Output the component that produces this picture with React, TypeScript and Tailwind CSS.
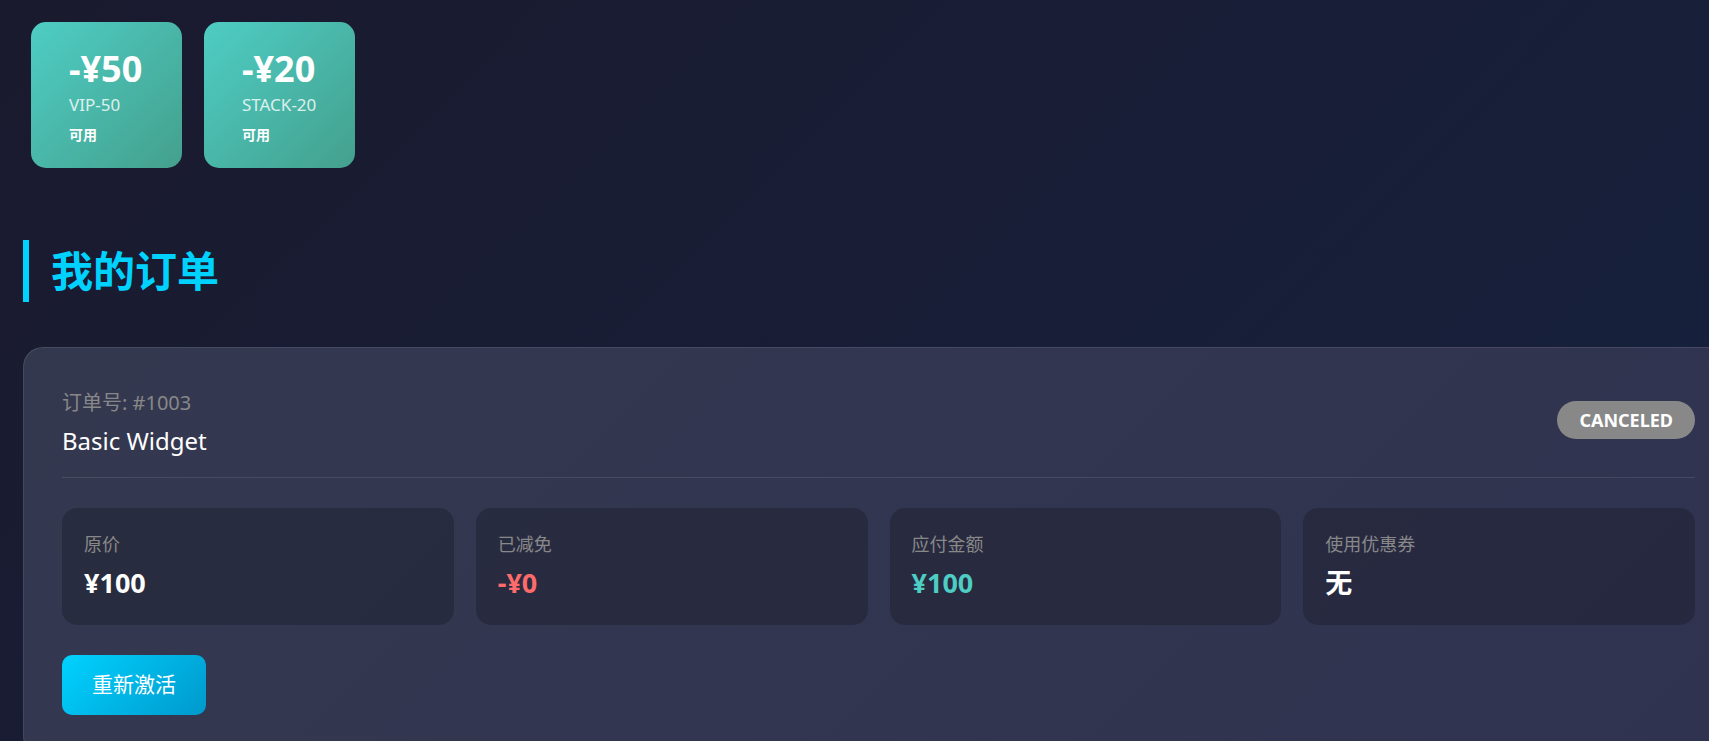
import React from "react";

const coupons = [
  { amount: "-¥50", code: "VIP-50", status: "可用" },
  { amount: "-¥20", code: "STACK-20", status: "可用" },
];

const stats = [
  { label: "原价", value: "¥100", color: "text-white" },
  { label: "已减免", value: "-¥0", color: "text-[#ff6b6b]" },
  { label: "应付金额", value: "¥100", color: "text-[#4ecdc4]" },
  { label: "使用优惠券", value: "无", color: "text-white" },
];

export default function App() {
  return (
    <div className="h-screen w-full overflow-hidden bg-[linear-gradient(135deg,#1a1a2e_0%,#16213e_100%)] font-['Noto_Sans','Noto_Sans_CJK_SC',sans-serif] text-white">
      <div className="pl-[23px] pt-[22px]">
        {/* Coupons */}
        <div className="ml-[8px] flex gap-[22px]">
          {coupons.map((c) => (
            <div
              key={c.code}
              className="w-[151px] shrink-0 rounded-[15px] bg-[linear-gradient(135deg,#4ecdc4_0%,#44a08d_100%)] pl-[38px] pt-[26px] pb-[23px]"
            >
              <div className="text-[36px] font-bold leading-[42px]">{c.amount}</div>
              <div className="mt-[4px] text-[17px] leading-[22px] text-white/80">{c.code}</div>
              <div className="mt-[9px] text-[14px] font-semibold leading-[20px]">{c.status}</div>
            </div>
          ))}
        </div>

        {/* Heading */}
        <h2 className="mt-[72px] border-l-[6px] border-[#00d2ff] pl-[22px] text-[42px] font-bold leading-[62px] text-[#00d2ff]">
          我的订单
        </h2>

        {/* Order card */}
        <div className="mt-[45px] w-[1711px] shrink-0 rounded-[20px] border border-white/10 bg-[linear-gradient(135deg,#34384f_0%,#303350_100%)] px-[38px] pt-[41px] pb-[40px]">
          <div className="flex items-center justify-between border-b border-white/10 pb-[20px]">
            <div>
              <div className="text-[20px] leading-[28px] text-[#888]">订单号: #1003</div>
              <div className="mt-[8px] text-[24px] leading-[32px] text-white">Basic Widget</div>
            </div>
            <div className="mb-[6px] flex h-[38px] items-center rounded-full bg-[#888] px-[22px] text-[18px] font-bold uppercase text-white">
              Canceled
            </div>
          </div>

          <div className="mt-[30px] grid grid-cols-4 gap-[22px]">
            {stats.map((s) => (
              <div
                key={s.label}
                className="rounded-[15px] bg-black/20 pl-[22px] pt-[24px] pb-[25px]"
              >
                <div className="text-[18px] leading-[24px] text-[#888]">{s.label}</div>
                <div className={`mt-[10px] text-[27px] font-bold leading-[34px] ${s.color}`}>
                  {s.value}
                </div>
              </div>
            ))}
          </div>

          <button className="mt-[30px] flex h-[60px] w-[144px] items-center justify-center rounded-[10px] bg-[linear-gradient(135deg,#00d2ff_0%,#0099cc_100%)] text-[21px] text-white">
            重新激活
          </button>
        </div>
      </div>
    </div>
  );
}
